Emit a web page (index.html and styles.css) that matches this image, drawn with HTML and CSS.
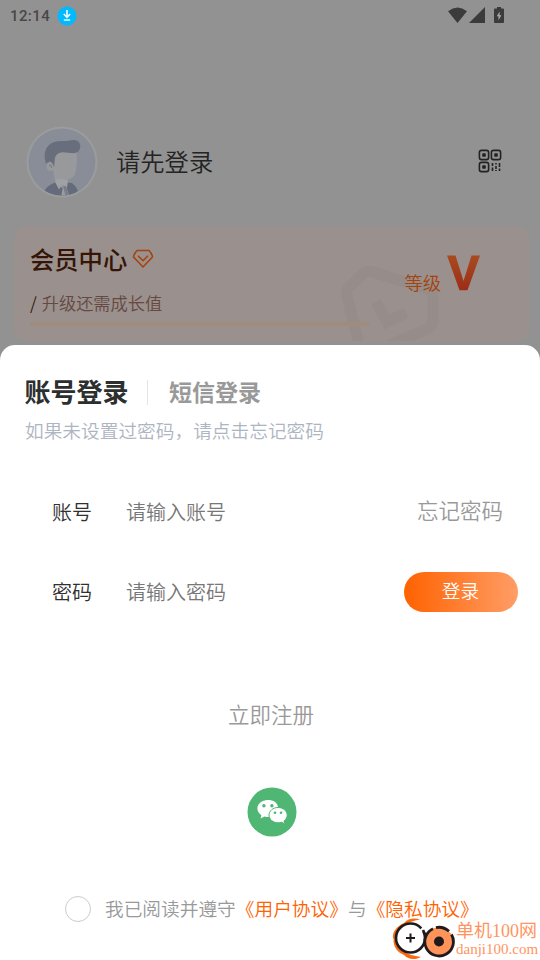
FILE: index.html
```html
<!DOCTYPE html>
<html lang="zh-CN">
<head>
<meta charset="utf-8">
<title>账号登录</title>
<link rel="stylesheet" href="styles.css">
</head>
<body>
<div class="screen">
  <section class="backdrop">
    <header class="status">
      <span class="time">12:14</span>
      <svg class="download" width="20" height="20" viewBox="0 0 20 20"><circle cx="10" cy="10" r="9.500" fill="#00baff"/><path d="M10 4v7M6.800 8l3.200 3.300L13.200 8M6.800 14h6.400" fill="none" stroke="#e8f6fb" stroke-width="1.700"/></svg>
      <svg class="signals" width="58" height="20" viewBox="0 0 58 20">
        <path d="M0 5.200Q9.500-2.200 19 5.200L9.500 17Z" fill="#3b3b3b"/>
        <path d="M37 1v16H21Z" fill="#3b3b3b"/>
        <path d="M49 1h4v1.500h2a1 1 0 0 1 1 1V16a1 1 0 0 1-1 1h-8a1 1 0 0 1-1-1V3.500a1 1 0 0 1 1-1h2Z" fill="#3b3b3b"/>
        <path d="M51.600 5.500 48.800 10.300h1.700v4l2.900-5h-1.800Z" fill="#aaa"/>
      </svg>
    </header>
    <div class="profile">
      <svg class="avatar" width="72" height="72" viewBox="0 0 72 72">
        <defs><clipPath id="face"><circle cx="36" cy="36" r="33.500"/></clipPath></defs>
        <circle cx="36" cy="36" r="35.500" fill="#9b9c9e"/>
        <circle cx="36" cy="36" r="33.500" fill="#888d98"/>
        <g clip-path="url(#face)">
          <path d="M18 66Q20 60 30 56L46 57Q50 60 52 65L43 72H25Z" fill="#666b7b"/>
          <path d="M27 43 29 55 36 62 41 60 41 52Z" fill="#989a9d"/>
          <path d="M29 56 33 63.500 36.500 58 41 62 42 54 31 53Z" fill="#a0a1a4"/>
          <path d="M37 60 35 72H44L40 60Z" fill="#9b9da1"/>
          <path d="M37 60H40L43 70 40 72Z" fill="#7a7e89"/>
          <path d="M26 40V30Q27 22 36 22H50.500Q51.500 34 50 45Q48 53.500 41 53.500Q32 53 28 44Z" fill="#98999b"/>
          <ellipse cx="24.500" cy="40.500" rx="4" ry="4.600" fill="#98999b"/>
          <path d="M23 39Q26 38.500 25.500 42" fill="none" stroke="#777b87" stroke-width="1"/>
          <path d="M20 38Q16 25 23 19Q28 14.500 37 15C42 15.300 44 14 48 14C52 14 54.500 17 54.300 20.500C54 25 51 27 47.500 27.200C41 27.300 34 24 30 29.500C28 32.500 29 37 28 41Q26.500 36 24 35.500Q21 36 20 38Z" fill="#696e7d"/>
        </g>
      </svg>
      <span class="nick">请先登录</span>
      <svg class="qr" width="24" height="24" viewBox="0 0 24 24" fill="none" stroke="#222">
        <g stroke-width="1.600"><rect x="1.400" y="1.400" width="9.200" height="9.200" rx="2.200"/><rect x="13.400" y="1.400" width="9.200" height="9.200" rx="2.200"/><rect x="1.400" y="13.400" width="9.200" height="9.200" rx="2.200"/></g>
        <g fill="#222" stroke="none"><rect x="4.200" y="4.200" width="3.600" height="3.600" rx=".8"/><rect x="16.200" y="4.200" width="3.600" height="3.600" rx=".8"/><rect x="4.200" y="16.200" width="3.600" height="3.600" rx=".8"/></g>
        <path d="M14.500 14v3M14.500 18.500v3.500M18 14v1.500M18 17v3M18 21v1M21.500 14v4M21.500 19.500v2.500" stroke-width="1.600"/>
      </svg>
    </div>
    <div class="card">
      <svg class="emblem" width="104" height="79" viewBox="0 0 104 79" fill="none" stroke="#968c8a"><path d="M21 86 8 34Q7 29 10 25L24 12Q28 8 34 10L88 27Q94 29 94 36V58Q94 64 88 67L50 83" stroke-width="11"/><path d="M37 40 48 60 67 51" stroke-width="11"/></svg>
      <div class="member">
        <div class="member-title"><span>会员中心</span>
          <svg width="22" height="20" viewBox="0 0 22 20" fill="none" stroke="#a5430d" stroke-width="1.600" stroke-linejoin="round"><path d="M5 1.500H17Q20 4.500 20.500 8L11 18 1.500 8Q2 4.500 5 1.500Z"/><path d="M6.500 7.200 11 11.700 15.500 7.200" stroke-linecap="round"/></svg>
        </div>
        <div class="growth"><b>/</b><span>升级还需成长值</span></div>
        <div class="bar"></div>
      </div>
      <div class="level"><span>等级</span><svg width="34" height="36" viewBox="0 0 34 36"><defs><linearGradient id="v" x2="0" y2="1"><stop stop-color="#a84b20"/><stop offset="1" stop-color="#9c2d17"/></linearGradient></defs><path d="M0 .500H8.500L16.500 26 24.500 .500H33L20.500 35.200H12.500Z" fill="url(#v)"/></svg></div>
    </div>
  </section>
  <main class="sheet">
    <nav class="tabs"><span class="tab active">账号登录</span><i></i><span class="tab">短信登录</span></nav>
    <p class="hint">如果未设置过密码，请点击忘记密码</p>
    <div class="fields">
      <div class="field"><label>账号</label><span class="placeholder">请输入账号</span><a class="forgot">忘记密码</a></div>
      <div class="field"><label>密码</label><span class="placeholder">请输入密码</span><button>登录</button></div>
    </div>
    <a class="register">立即注册</a>
    <svg class="wechat" width="50" height="50" viewBox="0 0 50 50">
      <circle cx="25" cy="25" r="24.500" fill="#50b674"/>
      <path d="M20.700 13C14.800 13 10.400 16.800 10.400 21.500c0 2.700 1.500 5 4 6.700l-.9 3.300 4-2c6.800 2 13.700-2 13.700-8S26.300 13 20.700 13Z" fill="#fff"/>
      <circle cx="16.900" cy="18.700" r="1.700" fill="#50b674"/><circle cx="24.900" cy="18.700" r="1.700" fill="#50b674"/>
      <path d="M31 20.500c-5 0-9 3.400-9 7.600s4 7.700 9 7.700c1.300 0 2.400-.2 3.500-.6l3.300 1.600-.8-2.800c2-1.500 3.200-3.500 3.200-5.900 0-4.200-4.100-7.600-9.200-7.600Z" fill="#fff" stroke="#50b674" stroke-width="1"/>
      <circle cx="28" cy="25.800" r="1.300" fill="#50b674"/><circle cx="34" cy="25.800" r="1.300" fill="#50b674"/>
    </svg>
    <div class="agree"><i></i><span>我已阅读并遵守<a>《用户协议》</a>与<a>《隐私协议》</a></span></div>
  </main>
  <aside class="watermark">
    <svg width="65" height="44" viewBox="0 0 65 44" fill="none">
      <path d="M29 2.500C24 .5 17 1 13 6C6 9 0 16 2.500 22C2 31 8 36 13 38C17 43 25 43 30 40C16 38 5 33 5 21C5 10 16 5 29 2.500Z" fill="#fa6a10"/>
      <circle cx="19.500" cy="21" r="14.500" fill="#fff" stroke="#201a1d" stroke-width="2.600" stroke-dasharray="80 4 8 0"/>
      <path d="M19.500 16.500v9M15 21h9" stroke="#201a1d" stroke-width="2"/>
      <path d="M32 13Q34 18 36 21" stroke="#201a1d" stroke-width="2.600"/>
      <circle cx="48" cy="24.500" r="14.300" fill="#ff945a"/>
      <path d="M42 11.700A14.300 14.300 0 1 0 60.500 17.500M45 10.600Q52 9 58 14.300M60.500 17.500Q62.500 21 62.300 25" stroke="#201a1d" stroke-width="2.800"/>
      <circle cx="48" cy="24.500" r="5" fill="#201a1d"/>
    </svg>
    <div class="brand"><strong>单机100网</strong><span>danji100.com</span></div>
  </aside>
</div>
</body>
</html>
```
FILE: styles.css
```css
* { box-sizing: border-box; }
body { margin: 0; font-family: "Noto Sans CJK SC", sans-serif; font-weight: 350; }
.screen { position: relative; width: 540px; height: 960px; overflow: hidden; background: #929292; display: flex; flex-direction: column; }
svg { display: block; flex: none; }
span, label, a, strong { white-space: nowrap; }
.backdrop { height: 345px; flex: none; }
.status { height: 32px; padding: 0 34px 0 10px; display: flex; align-items: center; }
.time { font: 500 15px/20px Roboto, sans-serif; letter-spacing: .4px; color: #484848; width: 47px; }
.signals { margin-left: auto; margin-top: 0; }
.profile { height: 194px; padding: 94px 38px 0 26px; display: flex; align-items: flex-start; }
.nick { margin: 17px 0 0 18px; font-size: 24.300px; line-height: 36px; color: #232323; }
.qr { margin: 23px 0 0 auto; }
.card { position: relative; margin: 0 11px 0 14px; height: 115px; padding: 16px 48px 0 16px; border-radius: 12px; overflow: hidden; background: #9a908e; display: flex; justify-content: space-between; }
.emblem { position: absolute; right: 86px; bottom: 0; }
.member { position: relative; width: 339px; }
.member-title { display: flex; align-items: center; gap: 5px; height: 33px; font-size: 24.300px; line-height: 33px; font-weight: 500; color: #351506; }
.growth { display: flex; gap: 5px; margin-top: 15px; height: 26px; font-size: 17.200px; line-height: 26px; color: #65483f; }
.growth b { font-weight: 350; color: #351506; }
.bar { height: 4px; margin-top: 6px; background: #9f8c7f; }
.level { position: relative; display: flex; gap: 6px; padding-top: 13px; }
.level span { margin-top: 13px; font-size: 18.300px; line-height: 28px; color: #a5430d; }
.sheet { flex: 1; background: #fff; border-radius: 15px 15px 0 0; display: flex; flex-direction: column; align-items: center; }
.tabs { width: 100%; height: 72px; padding: 19px 0 0 24.500px; display: flex; align-items: center; }
.tab { font-size: 23px; font-weight: 700; line-height: 40px; color: #999; }
.tab.active { font-size: 26px; color: #2d2f2f; }
.tabs i { width: 1px; height: 25px; margin: 4px 21.500px 0 18px; background: #e4e4e4; }
.hint { margin: 0; width: 100%; padding-left: 25px; font-size: 18.700px; line-height: 26px; color: #adb5c2; }
.fields { width: 100%; margin-top: 28px; padding: 0 22px 0 52px; }
.field { height: 80px; display: flex; align-items: center; font-size: 20px; }
.field label { width: 74px; color: #303030; }
.placeholder { color: #777; }
.forgot { margin: 0 15px 4px auto; font-size: 21.500px; color: #999; }
button { margin: 2px 0 0 auto; width: 114px; height: 40px; padding: 0 1px 4px 0; border: 0; border-radius: 20px; background: linear-gradient(90deg, #ff6200, #ff9d66); color: #fff; font: 350 18.700px/26px "Noto Sans CJK SC", sans-serif; }
.register { margin: 67px 0 0 2px; font-size: 21.500px; line-height: 32px; color: #999; }
.wechat { margin: 57px 0 0 3px; }
.agree { width: 100%; margin-top: 58px; padding-left: 65px; height: 28px; display: flex; align-items: center; gap: 14px; color: #999; font-size: 18.700px; line-height: 28px; }
.agree i { width: 26px; height: 26px; border: 1px solid #ccc; border-radius: 50%; }
.agree span { margin-top: -3px; }
.agree a { color: #ff6200; }
.watermark { position: absolute; left: 391px; top: 917px; display: flex; }
.brand { display: flex; flex-direction: column; color: #ff945f; }
.brand strong { font: 400 18px/28px "Liberation Serif", "Noto Sans CJK SC", serif; }
.brand span { font: 15px/9px "Liberation Serif", serif; }
```
